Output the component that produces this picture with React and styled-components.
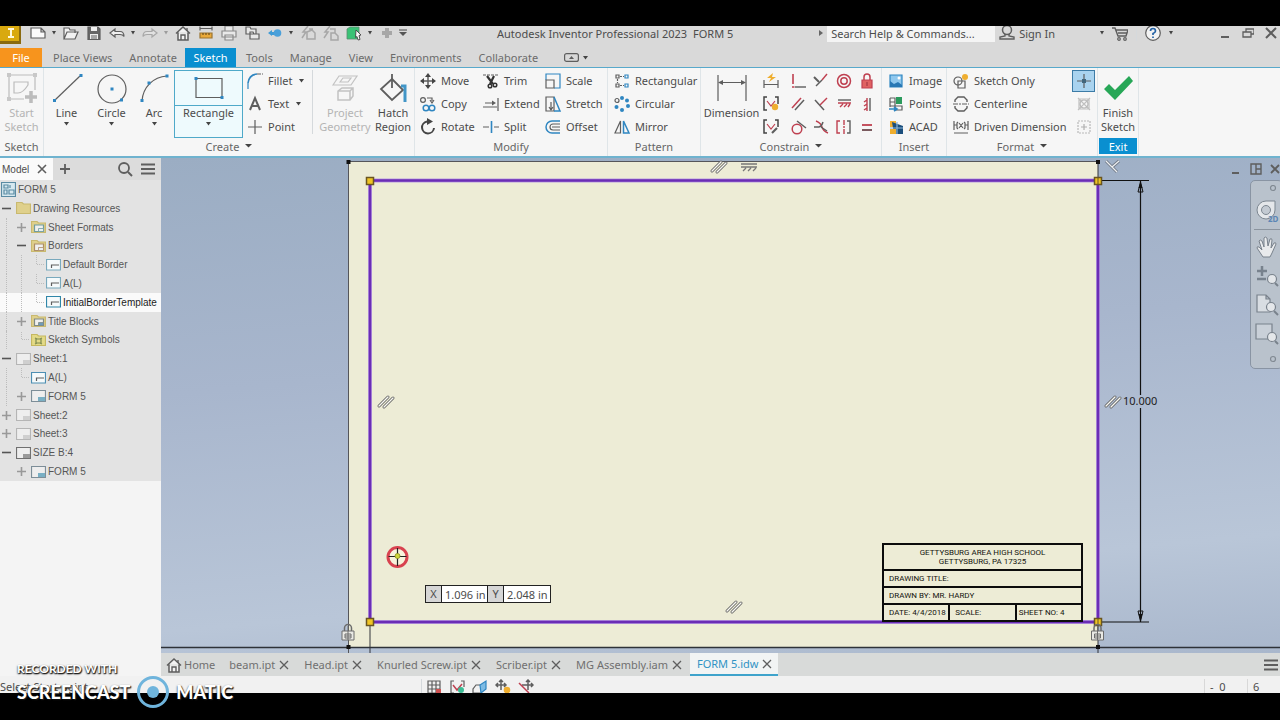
import React from 'react';
import styled, { createGlobalStyle, css } from 'styled-components';

const GlobalStyle = createGlobalStyle`
  * {
    box-sizing: border-box;
  }

  body {
    margin: 0;
    background: #000000;
    font-family: "Noto Sans", "Open Sans", sans-serif;
    font-size: 11px;
    color: #4c4c4c;
  }

  button, input {
    font-family: inherit;
    font-size: inherit;
    color: inherit;
  }

  svg {
    display: block;
    flex: none;
  }
`;

const Screen = styled.div`
  display: flex;
  flex-direction: column;
  height: 100vh;
  min-height: 600px;
  padding: 26px 0 27px;
  background: #000000;
  position: relative;
  overflow: hidden;
`;

const PlainButton = styled.button`
  display: flex;
  align-items: center;
  justify-content: center;
  padding: 0;
  border: none;
  background: transparent;
  cursor: pointer;
  white-space: nowrap;
`;

/* ---------- title bar ---------- */

const TitleBar = styled.header`
  display: flex;
  align-items: center;
  flex: none;
  height: 22px;
  padding-bottom: 8px;
  background: #d9d9d9;
  overflow: hidden;
`;

const QuickAccess = styled.div`
  display: flex;
  align-items: center;
  flex: none;
  width: 413px;
`;

const QuickButton = styled(PlainButton)`
  width: ${({ $caret }) => ($caret ? '10px' : '23px')};
  height: 18px;
  opacity: ${({ $dim }) => ($dim ? 0.4 : 1)};
`;

const Logo = styled.div`
  width: 21px;
  margin-right: 5px;
`;

const WindowTitle = styled.div`
  display: flex;
  gap: 6px;
  flex: 1;
  padding-left: 84px;
  white-space: nowrap;
`;

const SearchBox = styled.input`
  width: 168px;
  height: 18px;
  margin: 0 4px 0 3px;
  padding: 0 4px;
  border: none;
  background: #f4f4f4;

  &::placeholder {
    color: #4c4c4c;
    opacity: 1;
  }
`;

const SignIn = styled(PlainButton)`
  gap: 4px;
  margin-right: 45px;
`;

const TitleTools = styled.div`
  display: flex;
  align-items: center;
  gap: 8px;
  margin-right: 46px;
`;

const WindowButtons = styled.div`
  display: flex;
  gap: 11px;
  padding-right: 3px;
`;

/* ---------- ribbon ---------- */

const TabStrip = styled.nav`
  display: flex;
  flex: none;
  gap: 1px;
  height: 19px;
  background: #d9d9d9;
`;

const RibbonTab = styled(PlainButton)`
  height: 19px;
  padding: 0 7px 0 9px;
  color: #6b6b6b;

  ${({ $kind }) => $kind === 'file' && css`
    width: 42px;
    margin-right: 1px;
    padding: 0;
    background: #f7941d;
    color: #ffffff;
  `}

  ${({ $kind }) => $kind === 'active' && css`
    width: 51px;
    padding: 0;
    background: #0a8fd0;
    color: #ffffff;
  `}
`;

const RibbonToggle = styled(PlainButton)`
  gap: 4px;
  margin-left: 18px;
`;

const Ribbon = styled.div`
  display: flex;
  flex: none;
  height: 91px;
  border-top: 1px solid #58a9cb;
  border-bottom: 2px solid #6fb3cf;
  background: #f6f6f6;
`;

const Panel = styled.section`
  display: flex;
  flex-direction: column;
  flex: none;
  width: ${({ $width }) => $width}px;
  border-right: 1px solid #dfe5e8;
`;

const PanelTools = styled.div`
  display: flex;
  height: 70px;
  padding-top: 2px;
  padding-left: ${({ $left }) => $left || 0}px;
`;

const PanelLabel = styled.div`
  display: flex;
  align-items: center;
  justify-content: center;
  gap: 6px;
  height: 16px;
  color: #666666;

  ${({ $exit }) => $exit && css`
    margin: 0 1px;
    background: #0a8fd0;
    color: #ffffff;
  `}
`;

const BigButton = styled(PlainButton)`
  flex-direction: column;
  justify-content: flex-start;
  width: ${({ $width }) => $width}px;
  height: 68px;
  padding-top: 2px;
  line-height: 14px;
  white-space: pre-line;
  color: ${({ $dim }) => ($dim ? '#b4b4b4' : '#4c4c4c')};

  & > svg:first-child {
    margin-bottom: 2px;
  }

  & > svg:last-child:not(:first-child) {
    margin-top: 2px;
  }

  ${({ $selected }) => $selected && css`
    padding-top: 1px;
    border: 1px solid #4fa9c9;
    background: linear-gradient(#eefafd 34px, #4fa9c9 34px, #4fa9c9 35px, #eefafd 35px);
  `}
`;

const ToolGrid = styled.div`
  display: grid;
  grid-template-rows: repeat(3, 22px);
  grid-template-columns: ${({ $columns }) => $columns || 'auto'};
  grid-auto-flow: ${({ $flow }) => $flow || 'column'};
  row-gap: 1px;
  align-content: start;
  margin-left: ${({ $left }) => $left || 0}px;
`;

const SmallButton = styled(PlainButton)`
  justify-content: flex-start;
  gap: 4px;
  line-height: 14px;
  padding-bottom: 1px;

  & > svg:last-child:not(:first-child) {
    margin-left: 3px;
  }
`;

const ConstraintButton = styled(PlainButton)`
  justify-content: flex-start;
`;

const FormatToggle = styled(PlainButton)`
  width: 23px;
  height: 22px;
  border: 1px solid ${({ $on }) => ($on ? '#3c7ba6' : 'transparent')};
  background: ${({ $on }) => ($on ? '#a9d3ef' : 'transparent')};
`;

const Divider = styled.div`
  width: 1px;
  height: ${({ $height }) => $height || 64}px;
  background: #d5d9dc;
`;

/* ---------- browser panel ---------- */

const Workspace = styled.div`
  display: flex;
  flex: 1;
  min-height: 0;
`;

const Browser = styled.aside`
  display: flex;
  flex-direction: column;
  flex: none;
  width: 161px;
  background: #f4f4f4;
  font-family: "Liberation Sans", Arial, sans-serif;
`;

const BrowserHeader = styled.div`
  display: flex;
  align-items: center;
  flex: none;
  height: 22px;
  background: #dcdcdc;
`;

const BrowserTab = styled.div`
  display: flex;
  align-items: center;
  gap: 8px;
  width: 53px;
  height: 22px;
  padding-left: 2px;
  font-size: 10px;
  background: #fafafa;
`;

const BrowserTools = styled.div`
  display: flex;
  gap: 8px;
  margin-left: auto;
  padding-right: 6px;
`;

const Tree = styled.ul`
  display: grid;
  grid-template-rows: repeat(16, 1fr);
  height: 301px;
  margin: 0;
  padding: 0;
  list-style: none;
  font-size: 10px;
  background: #e3e3e3;
`;

const TreeRow = styled.li`
  display: flex;
  align-items: center;
  padding-left: ${({ $root }) => ($root ? 1 : 0)}px;
  white-space: nowrap;
  color: ${({ $selected }) => ($selected ? '#1c1c1c' : '#565656')};
  background: ${({ $selected }) => ($selected ? '#fafafa' : 'transparent')};
  overflow: hidden;

  & > svg:last-of-type {
    margin-right: 2px;
  }
`;

const Guide = styled.span`
  align-self: stretch;
  flex: none;
  width: 9px;
  margin-left: 6px;
  border-left: 1px dotted ${({ $blank }) => ($blank ? 'transparent' : '#bdbdbd')};
`;

const Expander = styled(PlainButton)`
  justify-content: flex-start;
  flex: none;
  width: 16px;
  height: 14px;
  padding-left: 2px;
`;

/* ---------- drawing area ---------- */

const DrawingColumn = styled.main`
  display: flex;
  flex-direction: column;
  flex: 1;
  min-width: 0;
`;

const Canvas = styled.div`
  position: relative;
  flex: 1;
  overflow: hidden;
  background: linear-gradient(175deg, #9badc3 0%, #a8b6cd 40%, #b9c6d8 80%, #a9b7cc 100%);
`;

const SheetDrawing = styled.svg`
  position: absolute;
  top: 0;
  left: 0;
  overflow: visible;
`;

const DimensionValue = styled.div`
  position: absolute;
  left: 962px;
  top: 235px;
  line-height: 16px;
  color: #222222;
`;

const CoordinateEntry = styled.div`
  position: absolute;
  left: 264px;
  top: 427px;
  display: flex;
  height: 18px;
  border: 1px solid #222222;
`;

const CoordinateLabel = styled.label`
  width: 15px;
  text-align: center;
  line-height: 16px;
  background: #d6d6d6;
`;

const CoordinateInput = styled.input`
  width: 47px;
  padding: 0 0 0 3px;
  border: none;
  border-left: 1px solid #222222;
  border-right: ${({ $last }) => ($last ? 'none' : '1px solid #222222')};
  background: #ffffff;
`;

const TitleBlock = styled.table`
  position: absolute;
  left: 721px;
  top: 385px;
  width: 201px;
  table-layout: fixed;
  border-collapse: collapse;
  font-family: Roboto, "Noto Sans", sans-serif;
  font-size: 8px;
  line-height: 9px;
  color: #14140e;

  td {
    height: 17px;
    padding: 0 0 0 5px;
    border: 2px solid #0c0c0c;
    white-space: nowrap;
  }

  tr:first-child td {
    height: 26px;
    padding: 0;
    text-align: center;
  }

  tr:last-child td:last-child {
    padding-left: 2px;
  }
`;

const DocumentButtons = styled.div`
  position: absolute;
  top: 5px;
  right: 0;
  display: flex;
  gap: 8px;
`;

const NavigationBar = styled.div`
  position: absolute;
  top: 22px;
  right: -3px;
  display: flex;
  flex-direction: column;
  align-items: center;
  gap: 5px;
  width: 33px;
  height: 189px;
  padding-top: 4px;
  border: 1px solid #8994a3;
  border-radius: 5px;
  background: #b9c2cc;
`;

const DocumentTabs = styled.div`
  display: flex;
  align-items: center;
  flex: none;
  height: 23px;
  padding-left: 5px;
  background: #d8dad9;
`;

const DocumentTab = styled.div`
  display: flex;
  align-items: center;
  gap: ${({ $home }) => ($home ? 2 : 4)}px;
  height: 23px;
  padding: 0 ${({ $home }) => ($home ? 5 : 6)}px 0 ${({ $home }) => ($home ? 0 : 9)}px;
  white-space: nowrap;
  color: #707070;

  ${({ $active }) => $active && css`
    padding: 0 6px 0 7px;
    margin-left: 2px;
    border-bottom: 2px solid #3fa3cb;
    background: #f2f4f4;
    color: #2f93c4;
  `}
`;

const TabMenu = styled(PlainButton)`
  margin-left: auto;
  padding-right: 2px;
`;

const StatusBar = styled.footer`
  display: flex;
  align-items: center;
  flex: none;
  height: 17px;
  padding-top: 4px;
  background: #f1f1f1;
  overflow: hidden;
`;

const StatusText = styled.div`
  width: 421px;
  white-space: nowrap;
`;

const StatusTools = styled.div`
  display: flex;
  flex: 1;
  gap: 7px;
  padding-left: 4px;
`;

const StatusCount = styled.div`
  width: ${({ $width }) => $width}px;
  border-left: 1px solid #d8d8d8;
  padding-left: 5px;
  white-space: pre;
`;

const Watermark = styled.div`
  position: absolute;
  left: 17px;
  bottom: 11px;
  font-family: Lato, sans-serif;
  font-weight: 700;
  color: #ffffff;
  text-shadow: 0 1px 2px #000000, 1px 1px 1px #333333;
`;

const WatermarkTop = styled.div`
  font-size: 12px;
  line-height: 12px;
`;

const WatermarkBrand = styled.div`
  display: flex;
  align-items: center;
  gap: 6px;
  font-size: 18px;
  font-weight: 900;
  line-height: 18px;
`;

/* ---------- icons ---------- */

const GREY = '#5e5e5e';
const BLUE = '#2f86c1';
const RED = '#bf4050';

const Icon = ({ size = 18, w, h, box, children }) => (
  <svg
    width={w || size}
    height={h || size}
    viewBox={box || `0 0 ${w || size} ${h || size}`}
    fill="none"
    stroke={GREY}
    strokeWidth="1.2"
    aria-hidden="true"
  >
    {children}
  </svg>
);

const Caret = ({ size = 5 }) => (
  <Icon w={size} h={4}>
    <path d={`M0 0h${size}l-${size / 2} 3.5z`} fill="#444" stroke="none" />
  </Icon>
);

const Close = ({ size = 10, width = 1.6 }) => (
  <Icon size={size}>
    <path d={`M1 1l${size - 2} ${size - 2}M${size - 1} 1L1 ${size - 1}`} strokeWidth={width} />
  </Icon>
);

const Bars = () => (
  <Icon w={14} h={12}>
    <path d="M0 1.5h14M0 6h14M0 10.5h14" strokeWidth="1.8" />
  </Icon>
);

const HomeIcon = () => (
  <Icon size={16}>
    <path d="M1 8.5L8 2l7 6.500M3 7.500V15h10V7.500" strokeWidth="1.5" fill="#f3f3f3" />
    <path d="M6 15v-5h4v5M12 3v3" strokeWidth="1.4" />
  </Icon>
);

const Handle = ({ x, y }) => <rect x={x - 1.5} y={y - 1.5} width="3" height="3" fill={BLUE} stroke="none" />;

const quickItems = [
  { name: 'New', icon: <Icon size={16}><path d="M1 3h10l4 4v6H1zM11 3v4h4" fill="#fafafa" /></Icon> },
  { caret: true, name: 'New options' },
  { name: 'Open', icon: <Icon size={16}><path d="M1 14V3h5l1 2h5v3M1 14l3-7h11l-3 7z" fill="#f2f2f2" /></Icon> },
  {
    name: 'Save',
    icon: (
      <Icon size={16}>
        <path d="M2 2h10l2 2v10.500H2z" fill="#666" />
        <path d="M5 2h6v4H5zM4 9h8v5H4z" fill="#eee" stroke="none" />
        <path d="M5 11h6M5 13h6" strokeWidth="1" />
      </Icon>
    ),
  },
  { name: 'Undo', icon: <Icon size={16}><path d="M1 8l5-4v2.500h5q4 0 4 5-1-2-4-2H6V12z" fill="#eee" /></Icon> },
  { caret: true, name: 'Undo options' },
  { name: 'Redo', dim: true, icon: <Icon size={16}><path d="M15 8l-5-4v2.500H5q-4 0-4 5 1-2 4-2h5V12z" fill="#eee" /></Icon> },
  { caret: true, dim: true, name: 'Redo options' },
  { name: 'Home', icon: <HomeIcon /> },
  {
    name: 'Measure',
    icon: (
      <Icon size={16}>
        <path d="M2 3.500h12M2 1.500v4M14 1.500v4" />
        <path d="M2 8h12v5H2z" fill="#e9a93a" stroke="#9b7430" />
        <path d="M5 8v2M8 8v2M11 8v2" stroke="#6d4f1c" />
      </Icon>
    ),
  },
  { name: 'Print', icon: <Icon size={16}><path d="M4 6V1h8v5M1 6h14v6H1zM4 10h8v5H4z" fill="#e9e9e9" stroke="#8a8a8a" /></Icon> },
  { name: 'Sheets', icon: <Icon size={16}><path d="M2 9V2h4l1 2h5v5zM6 14V7h3l1 2h5v5z" fill="#e8e8e8" /></Icon> },
  {
    name: 'Return',
    icon: (
      <Icon size={16}>
        <path d="M1 8l4-3v2h2v3H5v1z" fill="#3f9bd6" stroke="none" />
        <circle cx="10.5" cy="8" r="3.8" fill="#4aa0da" stroke="none" />
      </Icon>
    ),
  },
  { caret: true, name: 'Return options' },
  { name: 'Update', dim: true, icon: <Icon size={16}><path d="M8 1L3 7h3l-4 6M7 7l5-2 3 3v6H7zM9 4h4" strokeWidth="1.5" /></Icon> },
  { name: 'Rebuild', dim: true, icon: <Icon size={16}><path d="M7 1L2 7h3l-4 6M8 8h4l3 3v4H8zM12 8V4H7" strokeWidth="1.5" /></Icon> },
  {
    name: 'Select',
    icon: (
      <Icon size={16}>
        <path d="M1 4l3-2h9v10l-2 2H1z" fill="#39c275" stroke="#5c8c70" strokeWidth=".8" />
        <path d="M10 5l5 5-2 .5 1 4-2 .5-1-3.500-1.500 1z" fill="#fafafa" stroke="#444" strokeWidth=".9" />
      </Icon>
    ),
  },
  { caret: true, name: 'Select options' },
  { name: 'Add', dim: true, icon: <Icon size={16}><path d="M8 3v10M3 8h10" strokeWidth="4" /></Icon> },
];

const bigIcons = {
  line: <Icon size={32}><path d="M4 28L29 4" /><Handle x={3.5} y={28.5} /><Handle x={30} y={3.5} /></Icon>,
  circle: <Icon size={32}><circle cx="16" cy="17" r="14" /><Handle x={16} y={17} /><Handle x={25.5} y={28} /></Icon>,
  arc: <Icon size={32}><path d="M4 29C5 15 15 5 29 4" /><Handle x={4} y={28.5} /><Handle x={11} y={11} /><Handle x={29} y={4} /></Icon>,
  rect: <Icon size={32}><path d="M3 6.500h26v19H3z" /><Handle x={3} y={6.5} /><Handle x={29} y={25.5} /></Icon>,
  sketch: (
    <Icon size={32}>
      <g stroke="#bcbcbc">
        <path d="M3 3h26v15M3 3v24h15" />
        <path d="M8 10h14v3Q17 21 12 21H8z" />
        <path d="M25 19v12M19 25h12" strokeWidth="3.5" />
      </g>
      <path d="M1 1h4v4H1zM27 1h4v4h-4zM1 25h4v4H1z" fill="#c8c8c8" stroke="none" />
    </Icon>
  ),
  project: (
    <Icon size={32}>
      <g stroke="#c2c2c2">
        <path d="M4 13L10 4h18l-6 9zM11 10l3-4h8l-3 4z" />
        <path d="M9 19l4-3h11v8l-3 4H9zM9 19h12v9M21 19l3-3" strokeWidth="1.5" />
      </g>
    </Icon>
  ),
  hatch: (
    <Icon size={32}>
      <path d="M15 7L26 18 15 28 4 17z" strokeWidth="1.8" />
      <path d="M15 2v14" strokeWidth="1.8" />
      <path d="M24 14h4v16" stroke="#4296c7" strokeWidth="3" />
    </Icon>
  ),
  dimension: <Icon size={32}><path d="M2 3v26M30 3v26M3 10.500h26" /><path d="M2 10.500l5-2.500v5zM30 10.500l-5-2.500v5z" fill={GREY} stroke="none" /></Icon>,
  check: <Icon size={32}><path d="M2 17l5-5 6 6L27 4l4 5-18 19z" fill="#27a757" stroke="none" /></Icon>,
};

const createTools = [
  ['Fillet', <Icon><path d="M2 17V11" stroke={BLUE} /><path d="M2 11Q3 3 11 2" stroke={BLUE} strokeWidth="1.6" /><path d="M11 2h6" strokeDasharray="4 1" /></Icon>, true],
  ['Text', <Icon><path d="M4 15L9 3l5 12M6 11h6" strokeWidth="2" /></Icon>, true],
  ['Point', <Icon><path d="M9 2v5M9 11v5M2 9h5M11 9h5" /><path d="M9 7v4M7 9h4" /></Icon>],
];

const modifyTools = [
  ['Move', <Icon><path d="M9 3v12M3 9h12" strokeWidth="1.5" /><path d="M9 1l3 4H6zM9 17l3-4H6zM1 9l4-3v6zM17 9l-4-3v6z" fill="#444" stroke="none" /></Icon>],
  ['Copy', <Icon><circle cx="4" cy="5" r="2.4" /><path d="M8 3h5v3m-2-1l2 3 2-3" /><g stroke={BLUE} strokeWidth="1.5"><circle cx="7" cy="13" r="2.8" /><circle cx="13" cy="13" r="2.8" /></g></Icon>],
  ['Rotate', <Icon><path d="M8 3.500A6 6 0 1 0 15 10" strokeWidth="2" stroke="#444" /><path d="M8 0l6 3.500-6 3.500z" fill="#444" stroke="none" /></Icon>],
  ['Trim', <Icon><path d="M1 3h16" strokeDasharray="3 1" /><path d="M5 4l6 8M12 4l-4 8" strokeWidth="2.2" stroke="#333" /><circle cx="8" cy="14" r="1.8" strokeWidth="1.5" stroke="#333" /><circle cx="13" cy="13" r="1.8" strokeWidth="1.5" stroke="#333" /></Icon>],
  ['Extend', <Icon><path d="M1 12h14M3 8h8M16 3v13" /><path d="M10 5.500l4 2.500-4 2.500z" fill={GREY} stroke="none" /></Icon>],
  ['Split', <Icon><path d="M1 9h6M12 9h5" /><path d="M9.500 3v12" stroke={BLUE} strokeWidth="1.6" /></Icon>],
  ['Scale', <Icon><path d="M2 8V2h14v14h-6" stroke={BLUE} /><path d="M2 8h8v8H2z" /></Icon>],
  ['Stretch', <Icon><path d="M2 2h8v14H2z" /><path d="M10 2l6 14h-6" stroke={BLUE} strokeWidth="1.5" /><path d="M7 7v7m-2-2l2 3 2-3" /></Icon>],
  ['Offset', <Icon><path d="M16 3H8a6 6 0 0 0 0 12h8" stroke={BLUE} strokeWidth="1.5" /><path d="M16 6H9a3 3 0 0 0 0 6h7M8 9h8" /></Icon>],
];

const patternTools = [
  ['Rectangular', <Icon><path d="M3 3h3v3H3zM3 12h3v3H3z" /><path d="M12 3h3v3h-3zM12 12h3v3h-3z" stroke={BLUE} /><path d="M7 4.500h4M7 13.500h4M4.500 7v4" strokeDasharray="2 1" /></Icon>],
  ['Circular', (
    <Icon>
      <g fill={BLUE} stroke="none">
        <circle cx="9" cy="3" r="2" /><circle cx="14" cy="5.5" r="2" /><circle cx="15" cy="11" r="2" />
        <circle cx="9" cy="15" r="2" /><circle cx="3.5" cy="12" r="2" />
      </g>
      <circle cx="4" cy="5.5" r="2" />
    </Icon>
  )],
  ['Mirror', <Icon><path d="M7.500 3v12H2z" /><path d="M10.500 3v12H16z" stroke={BLUE} strokeWidth="1.5" /></Icon>],
];

const constrainTools = [
  ['Automatic Dimension', <Icon><path d="M2 8v8M16 8v8M2 12.500h14" /><path d="M11 1L5 6h4L7 10l7-5h-4z" fill="#efae2f" stroke="none" /></Icon>],
  ['Coincident', <Icon><path d="M6 15h11" strokeWidth="1.4" /><path d="M4 2v10M3 15h2.500" stroke={RED} strokeWidth="1.6" /></Icon>],
  ['Collinear', <Icon><path d="M2 5l5 5" strokeWidth="2" /><path d="M4 14l6-6" strokeWidth="1.4" /><path d="M10 8l5-6" stroke={RED} strokeWidth="1.4" /></Icon>],
  ['Concentric', <Icon><circle cx="9" cy="9" r="6.5" stroke={RED} strokeWidth="1.5" /><circle cx="9" cy="9" r="3.2" stroke={RED} strokeWidth="1.5" /></Icon>],
  ['Fix', <Icon><path d="M6 8V5a3 3 0 0 1 6 0v3" stroke={RED} strokeWidth="1.5" /><path d="M4 8h10v8H4z" fill="#e06262" stroke={RED} /><path d="M9 10v4" stroke="#a53a45" /></Icon>],
  ['Show Constraints', <Icon><path d="M5 2H2v13h3M13 2h3v7" stroke="#444" strokeWidth="1.5" /><path d="M5 6l4 5 4-5" stroke={RED} /><circle cx="13" cy="12" r="3.2" fill="#efae2f" stroke="none" /></Icon>],
  ['Parallel', <Icon><path d="M3 13L12 3" stroke={RED} strokeWidth="1.5" /><path d="M6 15l9-10" strokeWidth="1.5" /></Icon>],
  ['Perpendicular', <Icon><path d="M3 5l9 10" strokeWidth="1.5" /><path d="M8 10l7-7" stroke={RED} strokeWidth="1.5" /></Icon>],
  ['Horizontal', <Icon><path d="M3 5h13" strokeWidth="1.4" /><path d="M3 8h13M5 12l3-3M9 12l3-3M13 12l2-3" stroke={RED} strokeWidth="1.4" /></Icon>],
  ['Vertical', <Icon><path d="M12 3v13" strokeWidth="1.4" /><path d="M9 3v13M9 5L6 7M9 9l-3 2M9 13l-3 2" stroke={RED} strokeWidth="1.4" /></Icon>],
  ['Constraint Settings', <Icon><path d="M5 2H2v13h3M13 2h3v7" stroke="#444" strokeWidth="1.5" /><path d="M5 6l4 5 4-5" stroke={RED} /><path d="M10 15l5-5" strokeWidth="2.2" /></Icon>],
  ['Tangent', <Icon><circle cx="8" cy="11" r="4.8" stroke={RED} strokeWidth="1.5" /><path d="M8 3l9 7" strokeWidth="1.5" /></Icon>],
  ['Smooth', <Icon><path d="M4 3q5 2 6 6t6 6" stroke={RED} strokeWidth="1.4" /><path d="M2 9h5q3-1 4-5M9 9l6 4" strokeWidth="1.4" /></Icon>],
  ['Symmetric', <Icon><path d="M5 3H2v12h3M9 2v5M9 8v2M9 11v5" stroke={RED} strokeWidth="1.4" /><path d="M12 3h3v12h-3" strokeWidth="1.4" /></Icon>],
  ['Equal', <Icon><path d="M4 7h10" stroke={RED} strokeWidth="1.8" /><path d="M4 12h10" stroke="#6e4a4e" strokeWidth="1.8" /></Icon>],
];

const insertTools = [
  ['Image', <Icon><path d="M3 3h12v12H3z" fill="#8fc8ee" stroke={BLUE} /><path d="M3 15V9l4 3 4-2 4 3v2z" fill="#2878b5" stroke="none" /><circle cx="12" cy="6" r="1.5" fill="#fff" stroke="none" /></Icon>],
  ['Points', <Icon><path d="M3 3h5v12M3 3v9M3 7h5M3 11h5M8 11h7v4H8" /><path d="M9 2h6v7H9z" fill="#2b9a5c" stroke="none" /><path d="M2 14h7m-2-2l3 2-3 2" stroke={BLUE} strokeWidth="1.6" /></Icon>],
  ['ACAD', <Icon><path d="M3 3h6v6H3z" fill="#efae2f" stroke="none" /><path d="M5 4l11 4v8H7z" fill="#1b4e7c" stroke="none" /><path d="M3 10h13M10 4v12" stroke="#8bb5d8" /><path d="M3 11h6v5H3z" fill="#efae2f" stroke="none" /></Icon>],
];

const formatTools = [
  ['Sketch Only', <Icon><circle cx="6" cy="9" r="4" /><path d="M6 9h7v7H6z" /><circle cx="13" cy="5" r="3" fill="#efae2f" stroke="none" /></Icon>],
  ['Centerline', <Icon><path d="M3 7V5l3-3h6l3 3v2M3 11v2l3 3h6l3-3v-2" strokeWidth="1.4" /><path d="M1 9h16" strokeDasharray="5 1 2 1" /></Icon>],
  ['Driven Dimension', <Icon><path d="M2 3v9M16 3v9M2 7h3M13 7h3M6 4l-1 1v5l1 1M12 4l1 1v5l-1 1M7 5l4 5M11 5l-4 5M2 15h14" /></Icon>],
];

const sheetIcon = (color, fill) => (
  <Icon w={15} h={14}>
    <path d="M.5 1.500h14v11H.5z" fill="#eeeeee" stroke={color} />
    <path d="M7 8h7v4H7z" fill={fill} stroke="none" />
  </Icon>
);

const folderIcon = (color, fill = '#e8edef') => (
  <Icon w={15} h={14}>
    <path d="M.5 12.500v-11H6l1.500 1.500h7v9.500z" fill="#dfd08c" stroke="#c9b96f" />
    {color && <path d="M3.500 5h9v6.500h-9z" fill="#f0f0ee" stroke={color} />}
    {color && <path d="M7.500 8.500h5v3h-5z" fill={fill} stroke={color} strokeWidth=".8" />}
  </Icon>
);

const borderIcon = (color) => (
  <Icon w={15} h={14}>
    <path d="M.5 1.500h14v10.500H.5z" fill="#f6fafb" stroke={color} />
    <path d="M5.500 10V7H13" />
  </Icon>
);

const treeItems = [
  {
    level: 0, label: 'FORM 5',
    icon: <Icon w={15} h={15}><path d="M.5.5h14v14H.5z" fill="#d6e8ef" stroke="#5a8ba3" /><path d="M3 3h4v3H3zM3 8h3v4H3zM8 8h5v4H8zM9 3v3" stroke="#5a8ba3" /></Icon>,
  },
  { level: 1, label: 'Drawing Resources', state: 'open', icon: folderIcon() },
  { level: 2, label: 'Sheet Formats', state: 'closed', icon: folderIcon('#6f9c9f') },
  { level: 2, label: 'Borders', state: 'open', icon: folderIcon('#ad8d68') },
  { level: 3, label: 'Default Border', icon: borderIcon('#79a9bd') },
  { level: 3, label: 'A(L)', icon: borderIcon('#79a9bd') },
  { level: 3, label: 'InitialBorderTemplate', selected: true, icon: borderIcon('#2f86a8') },
  { level: 2, label: 'Title Blocks', state: 'closed', icon: folderIcon('#808a86', '#6f9cba') },
  {
    level: 2, label: 'Sketch Symbols',
    icon: <Icon w={15} h={14}><path d="M.5 12.500v-11H6l1.500 1.500h7v9.500z" fill="#e3da86" stroke="#c5b860" /><path d="M4 5l2 1h3l2-1M4 11l2-1h3l2 1M5 6v4M10 6v4" stroke="#7c8a50" /></Icon>,
  },
  { level: 1, label: 'Sheet:1', state: 'open', icon: sheetIcon('#b5b5b5', '#cfcfcf') },
  { level: 2, label: 'A(L)', icon: borderIcon('#4d8fb3') },
  { level: 2, label: 'FORM 5', state: 'closed', icon: sheetIcon('#7d8e98', '#79afc4') },
  { level: 1, label: 'Sheet:2', state: 'closed', icon: sheetIcon('#b5b5b5', '#cfcfcf') },
  { level: 1, label: 'Sheet:3', state: 'closed', icon: sheetIcon('#b5b5b5', '#cfcfcf') },
  { level: 1, label: 'SIZE B:4', state: 'open', icon: sheetIcon('#707070', '#9a9a9a') },
  { level: 2, label: 'FORM 5', state: 'closed', icon: sheetIcon('#7d8e98', '#79afc4') },
];

const documents = ['beam.ipt', 'Head.ipt', 'Knurled Screw.ipt', 'Scriber.ipt', 'MG Assembly.iam', 'FORM 5.idw'];

/* ---------- parts ---------- */

const Tools = ({ items, ...grid }) => (
  <ToolGrid {...grid}>
    {items.map(([label, icon, menu]) => (
      <SmallButton key={label}>
        {icon}
        <span>{label}</span>
        {menu && <Caret />}
      </SmallButton>
    ))}
  </ToolGrid>
);

const TopBar = () => (
  <TitleBar>
    <QuickAccess>
      <Logo>
        <Icon w={21} h={22}>
          <path d="M0 0h21v22H0z" fill="#8a6a10" stroke="none" />
          <path d="M0 0h19v19H0z" fill="#d9a90f" stroke="none" />
          <path d="M8 7h6M8 15h6M11 7v8" stroke="#fff8dc" strokeWidth="2" />
        </Icon>
      </Logo>
      {quickItems.map((item) => (
        <QuickButton key={item.name} aria-label={item.name} $caret={item.caret} $dim={item.dim}>
          {item.caret ? <Caret size={4} /> : item.icon}
        </QuickButton>
      ))}
      <QuickButton aria-label="Customize" $caret>
        <Icon w={8} h={8}><path d="M0 1h8" /><path d="M0 3h8L4 7z" fill="#555" stroke="none" /></Icon>
      </QuickButton>
    </QuickAccess>
    <WindowTitle>
      <span>Autodesk Inventor Professional 2023</span>
      <span>FORM 5</span>
    </WindowTitle>
    <Icon w={5} h={8}><path d="M0 1l4 3-4 3z" fill="#666" stroke="none" /></Icon>
    <SearchBox aria-label="Search help" placeholder="Search Help &amp; Commands..." />
    <SignIn>
      <Icon size={16}><circle cx="8" cy="5" r="4.5" strokeWidth="1.5" /><path d="M6 9v2l-5 1v2h14v-2l-5-1V9" strokeWidth="1.4" /></Icon>
      <span>Sign In</span>
    </SignIn>
    <TitleTools>
      <Caret size={4} />
      <Icon size={16}><path d="M0 3h3l3 8h8l2-6H4M6 8h9" strokeWidth="1.4" /><circle cx="7" cy="14" r="1.3" /><circle cx="13" cy="14" r="1.3" /></Icon>
      <Divider $height={16} />
      <PlainButton aria-label="Help">
        <Icon size={16}>
          <circle cx="8" cy="8" r="7.3" fill="#f3f3f3" />
          <path d="M5.500 6q0-2.500 2.500-2.500T10.500 6Q10.500 7.500 8 8.500V10M8 11.500v1.500" stroke="#2462a5" strokeWidth="1.7" />
        </Icon>
      </PlainButton>
      <Caret size={4} />
    </TitleTools>
    <WindowButtons>
      <PlainButton aria-label="Minimize"><Icon size={12}><path d="M2 10h8" strokeWidth="2" /></Icon></PlainButton>
      <PlainButton aria-label="Restore"><Icon size={12}><path d="M1 5h8v5H1zM4 5V2h8v5H9" strokeWidth="1.3" /></Icon></PlainButton>
      <PlainButton aria-label="Close"><Close size={12} width={2} /></PlainButton>
    </WindowButtons>
  </TitleBar>
);

const RibbonBar = () => (
  <Ribbon>
    <Panel $width={44}>
      <PanelTools>
        <BigButton $width={43} $dim>{bigIcons.sketch}{'Start\nSketch'}</BigButton>
      </PanelTools>
      <PanelLabel>Sketch</PanelLabel>
    </Panel>
    <Panel $width={371}>
      <PanelTools>
        <BigButton $width={45}>{bigIcons.line}Line<Caret /></BigButton>
        <BigButton $width={45}>{bigIcons.circle}Circle<Caret /></BigButton>
        <BigButton $width={40}>{bigIcons.arc}Arc<Caret /></BigButton>
        <BigButton $width={69} $selected>{bigIcons.rect}Rectangle<Caret /></BigButton>
        <Tools items={createTools} $columns="66px" $left={3} />
        <Divider />
        <BigButton $width={64} $dim>{bigIcons.project}{'Project\nGeometry'}</BigButton>
        <BigButton $width={32}>{bigIcons.hatch}{'Hatch\nRegion'}</BigButton>
      </PanelTools>
      <PanelLabel>Create <Caret size={7} /></PanelLabel>
    </Panel>
    <Panel $width={193}>
      <PanelTools $left={4}>
        <Tools items={modifyTools} $columns="63px 62px 60px" />
      </PanelTools>
      <PanelLabel>Modify</PanelLabel>
    </Panel>
    <Panel $width={93}>
      <PanelTools $left={5}>
        <Tools items={patternTools} />
      </PanelTools>
      <PanelLabel>Pattern</PanelLabel>
    </Panel>
    <Panel $width={181}>
      <PanelTools>
        <BigButton $width={64}>{bigIcons.dimension}Dimension</BigButton>
        <ToolGrid $columns="27px repeat(4, 23px)" $flow="row">
          {constrainTools.map(([label, icon]) => (
            <ConstraintButton key={label} aria-label={label}>{icon}</ConstraintButton>
          ))}
        </ToolGrid>
      </PanelTools>
      <PanelLabel>Constrain <Caret size={7} /></PanelLabel>
    </Panel>
    <Panel $width={65}>
      <PanelTools $left={5}>
        <Tools items={insertTools} />
      </PanelTools>
      <PanelLabel>Insert</PanelLabel>
    </Panel>
    <Panel $width={151}>
      <PanelTools $left={5}>
        <Tools items={formatTools} $columns="120px" />
        <ToolGrid>
          <FormatToggle $on aria-label="Center Point"><Icon><path d="M9 2v14M2 9h14" /><path d="M7 7h4v4H7z" fill="#42667c" stroke="none" /></Icon></FormatToggle>
          <FormatToggle aria-label="Construction"><Icon><path d="M3 3l12 12M15 3L3 15M4 4h10v10H4z" stroke="#c0c0c0" /><circle cx="9" cy="9" r="4" stroke="#b5b5b5" /></Icon></FormatToggle>
          <FormatToggle aria-label="Show Format"><Icon><path d="M3 3h12v12H3z" stroke="#b8b8b8" strokeDasharray="2 1" /><path d="M9 6v6M6 9h6" stroke="#b0b0b0" /></Icon></FormatToggle>
        </ToolGrid>
      </PanelTools>
      <PanelLabel>Format <Caret size={7} /></PanelLabel>
    </Panel>
    <Panel $width={41}>
      <PanelTools>
        <BigButton $width={41}>{bigIcons.check}{'Finish\nSketch'}</BigButton>
      </PanelTools>
      <PanelLabel $exit>Exit</PanelLabel>
    </Panel>
  </Ribbon>
);

const BrowserPanel = () => (
  <Browser>
    <BrowserHeader>
      <BrowserTab>
        Model
        <PlainButton aria-label="Close panel"><Close /></PlainButton>
      </BrowserTab>
      <PlainButton aria-label="Add panel">
        <Icon w={24} h={12}><path d="M12 1v10M7 6h10" strokeWidth="1.8" /></Icon>
      </PlainButton>
      <BrowserTools>
        <PlainButton aria-label="Search"><Icon size={16}><circle cx="7" cy="7" r="5" strokeWidth="1.8" /><path d="M11 11l4 4" strokeWidth="2" /></Icon></PlainButton>
        <PlainButton aria-label="Menu"><Bars /></PlainButton>
      </BrowserTools>
    </BrowserHeader>
    <Tree>
      {treeItems.map((item, i) => (
        <TreeRow key={i} $root={item.level === 0} $selected={item.selected}>
          {item.level > 1 && <Guide $blank={i > 14} />}
          {item.level > 2 && <Guide />}
          {item.state && (
            <Expander aria-label={item.state === 'open' ? 'Collapse' : 'Expand'}>
              <Icon size={9}><path d={item.state === 'open' ? 'M0 4.500h9' : 'M0 4.500h9M4.500 0v9'} strokeWidth="1.6" stroke={item.state === 'open' ? '#555' : '#999'} /></Icon>
            </Expander>
          )}
          {item.level > 0 && !item.state && <Icon w={16} h={19}><path d="M6.500 0v9.500H14" stroke="#bdbdbd" strokeWidth="1" strokeDasharray="1 1" /></Icon>}
          {item.icon}
          {item.label}
        </TreeRow>
      ))}
    </Tree>
  </Browser>
);

const Parallel = ({ x, y }) => (
  <g transform={`translate(${x} ${y})`} strokeLinecap="round">
    <path d="M-6 4L3-5M-1 5L8-4" stroke="#5f5f5f" strokeWidth="3" />
    <path d="M-6 4L3-5M-1 5L8-4" stroke="#fafaf4" strokeWidth="1.4" />
  </g>
);

const Padlock = ({ x, y }) => (
  <g transform={`translate(${x} ${y})`} stroke="#6c6c6c">
    <path d="M-3.500-1v-3a3.500 3.500 0 0 1 7 0v3" strokeWidth="1.5" />
    <path d="M-6-1H6V8H-6z" fill="#e9e9e4" />
    <path d="M-3 2h6v4h-6zM0-6V8M-3 4h6" strokeWidth="1" />
  </g>
);

const Corner = ({ x, y }) => (
  <rect x={x - 3.5} y={y - 3.5} width="7" height="7" fill="#f0c425" stroke="#6a5520" strokeWidth="1.5" />
);

/* Drawn in window coordinates, the canvas starting at 161,158 */
const Sheet = () => (
  <SheetDrawing width="1119" height="495" viewBox="161 158 1119 495" fill="none">
    <rect x="348" y="162" width="750" height="485" fill="#edecd6" />
    <path d="M348.500 653V161.500H1098" stroke="#55565a" />
    <path d="M1098 161.500V653M370 622v31" stroke="#33343a" />
    <path d="M161 647.500H3000" stroke="#2e3238" strokeWidth="1.6" />
    <path d="M346.500 160h4v4h-4zM346.500 645h4v4h-4zM1096 160h4v4h-4zM1096 645h4v4h-4z" fill="#111" />
    <path d="M370 180.500H1098V622H370z" stroke="#b99be0" strokeWidth="4" />
    <path d="M370 180.500H1098V622H370z" stroke="#6a2db5" strokeWidth="2.5" />
    <path d="M1101 180.500h48M1101 622h48M1140.500 181v214M1140.500 408v214" stroke="#111" strokeWidth="1.2" />
    <path d="M1140.500 182l-2.500 10h5zM1140.500 621l-2.500-10h5z" stroke="#111" />
    <path d="M1140.500 182l-2 6h4zM1140.500 621l-2-7h4z" fill="#111" />
    <Corner x={370} y={181} />
    <Corner x={1098} y={181} />
    <Corner x={370} y={622} />
    <Corner x={1098} y={622} />
    <path d="M1098 177v8M1098 618v8" stroke="#6a5520" />
    <Parallel x={718} y={167} />
    <Parallel x={385} y={402} />
    <Parallel x={733} y={607} />
    <Parallel x={1112} y={402} />
    <path d="M741 164h16M741 167h16M743 171l3-3M748 171l3-3M753 171l3-3" stroke="#777" strokeWidth="1.3" />
    <path d="M1106 161l11 11M1112 167l7-6" stroke="#737b88" strokeWidth="3" />
    <path d="M1106 161l11 11M1112 167l7-6" stroke="#eef0f2" strokeWidth="1.2" />
    <Padlock x={348} y={632} />
    <Padlock x={1097.5} y={632} />
    <circle cx="397.5" cy="557" r="9.5" fill="#f7f3dc" stroke="#d8424f" strokeWidth="3" />
    <path d="M397.500 548v18M388.500 556.500h18" stroke="#222" strokeWidth="1.2" />
    <circle cx="397.5" cy="556" r="2.5" fill="#cfd63a" stroke="#8b9120" strokeWidth=".8" />
  </SheetDrawing>
);

const NavigationTools = () => (
  <NavigationBar>
    <Icon w={22} h={8}><circle cx="17" cy="3" r="2.5" stroke="#808992" /></Icon>
    <PlainButton aria-label="Steering wheel">
      <svg width="24" height="26" viewBox="0 0 24 26" fill="none">
        <path d="M11 3h9v9a9 9 0 1 1-9-9z" fill="#e4e7ea" stroke="#7d8791" />
        <circle cx="11" cy="12" r="4.5" fill="#c3cad2" stroke="#7d8791" />
        <text x="13" y="24" fontSize="8" fontWeight="700" fill="#5c86b5">2D</text>
      </svg>
    </PlainButton>
    <Icon w={26} h={1}><path d="M0 .5h26" stroke="#8b949e" /></Icon>
    <PlainButton aria-label="Pan">
      <Icon size={24}><path d="M8 22L2 13q0-2 2-1l3 3-3-9q1-2 3 0l2 6V3q1-2 3 0l1 8 2-7q2-1 2 1l-1 8 3-5q2-1 2 1l-4 9-2 4z" fill="#e8eaec" stroke="#79828c" strokeWidth="1" /></Icon>
    </PlainButton>
    <PlainButton aria-label="Zoom">
      <Icon size={24}><path d="M2 7h10M7 2v10M2 15h9" stroke="#78828d" strokeWidth="2.5" /><circle cx="17" cy="15" r="4.5" fill="#e4e7ea" stroke="#79828c" /><path d="M20 19l3 3" stroke="#79828c" strokeWidth="2" /></Icon>
    </PlainButton>
    <PlainButton aria-label="Zoom all">
      <Icon size={24}><path d="M2 2h9l4 4v13H2zM11 2v4h4" fill="#d8dde2" stroke="#79828c" /><circle cx="16" cy="14" r="4.5" fill="#e4e7ea" stroke="#79828c" /><path d="M19 18l4 4" stroke="#79828c" strokeWidth="2" /></Icon>
    </PlainButton>
    <PlainButton aria-label="Zoom window">
      <Icon size={24}><path d="M1 2h16v15H1z" fill="#c9d0d8" stroke="#79828c" /><circle cx="17" cy="15" r="4.5" fill="#e4e7ea" stroke="#79828c" /><path d="M20 19l3 3" stroke="#79828c" strokeWidth="2" /></Icon>
    </PlainButton>
    <Icon w={22} h={12}><circle cx="17" cy="8" r="2.5" stroke="#808992" /></Icon>
  </NavigationBar>
);

const DrawingArea = () => (
  <DrawingColumn>
    <Canvas>
      <Sheet />
      <DimensionValue>10.000</DimensionValue>
      <CoordinateEntry>
        <CoordinateLabel htmlFor="coord-x">X</CoordinateLabel>
        <CoordinateInput id="coord-x" defaultValue="1.096 in" />
        <CoordinateLabel htmlFor="coord-y">Y</CoordinateLabel>
        <CoordinateInput id="coord-y" defaultValue="2.048 in" $last />
      </CoordinateEntry>
      <TitleBlock>
        <tbody>
          <tr><td colSpan={3}>GETTYSBURG AREA HIGH SCHOOL<br />GETTYSBURG, PA 17325</td></tr>
          <tr><td colSpan={3}>DRAWING TITLE:</td></tr>
          <tr><td colSpan={3}>DRAWN BY: MR. HARDY</td></tr>
          <tr><td>DATE: 4/4/2018</td><td>SCALE:</td><td>SHEET NO: 4</td></tr>
        </tbody>
      </TitleBlock>
      <DocumentButtons>
        <PlainButton aria-label="Minimize drawing"><Icon size={12}><path d="M2 10h7" strokeWidth="2" /></Icon></PlainButton>
        <PlainButton aria-label="Arrange drawing"><Icon size={12}><path d="M1 1h10v10H1zM6 1v10M6 6h5" strokeWidth="1.4" /></Icon></PlainButton>
        <PlainButton aria-label="Close drawing"><Close size={10} width={1.8} /></PlainButton>
      </DocumentButtons>
      <NavigationTools />
    </Canvas>
    <DocumentTabs>
      <DocumentTab $home><HomeIcon />Home</DocumentTab>
      {documents.map((name) => (
        <DocumentTab key={name} $active={name === 'FORM 5.idw'}>
          {name}
          <PlainButton aria-label={`Close ${name}`}><Close size={10} width={1.3} /></PlainButton>
        </DocumentTab>
      ))}
      <TabMenu aria-label="Document list"><Bars /></TabMenu>
    </DocumentTabs>
  </DrawingColumn>
);

const Status = () => (
  <StatusBar>
    <StatusText>Select Start point</StatusText>
    <Divider $height={16} />
    <StatusTools>
      <Icon size={16}><path d="M2 2h12v12H2zM2 6h12M2 10h12M6 2v12M10 2v12" /><path d="M10 10h5v6h-5z" fill="#cf5252" stroke="none" /></Icon>
      <Icon size={16}><path d="M5 2H2v12h3M12 2h3v6" /><path d="M4 6l4 5 5-6" stroke={RED} strokeWidth="1.5" /><circle cx="12" cy="11" r="3" fill="#3bbb94" stroke="none" /></Icon>
      <Icon size={16}><path d="M8 6H4L1 10v4h8" /><path d="M8 6l6-4v8l-5 4z" fill="#7dbbe4" stroke={BLUE} /></Icon>
      <Icon size={16}><path d="M1 6h10M6 1v10M3 4L1 6l2 2M9 4l2 2-2 2M4 3l2-2 2 2" strokeWidth="1.5" /><circle cx="12" cy="11" r="3.3" fill="#efae2f" stroke="none" /></Icon>
      <Icon size={16}><path d="M4 6h11M10 1v10M13 4l2 2-2 2M8 3l2-2 2 2" strokeWidth="1.5" /><path d="M1 4l10 10" stroke={RED} strokeWidth="1.5" /></Icon>
    </StatusTools>
    <StatusCount $width={43}>-  0</StatusCount>
    <StatusCount $width={33}>6</StatusCount>
  </StatusBar>
);

const App = () => {
  return (
    <Screen>
      <GlobalStyle />
      <TopBar />
      <TabStrip>
        <RibbonTab $kind="file">File</RibbonTab>
        <RibbonTab>Place Views</RibbonTab>
        <RibbonTab>Annotate</RibbonTab>
        <RibbonTab $kind="active">Sketch</RibbonTab>
        <RibbonTab>Tools</RibbonTab>
        <RibbonTab>Manage</RibbonTab>
        <RibbonTab>View</RibbonTab>
        <RibbonTab>Environments</RibbonTab>
        <RibbonTab>Collaborate</RibbonTab>
        <RibbonToggle aria-label="Ribbon display">
          <Icon w={15} h={9}><rect x=".6" y=".6" width="13.8" height="7.8" rx="2" /><path d="M5 6h5L7.500 3z" fill={GREY} stroke="none" /></Icon>
          <Caret />
        </RibbonToggle>
      </TabStrip>
      <RibbonBar />
      <Workspace>
        <BrowserPanel />
        <DrawingArea />
      </Workspace>
      <Status />
      <Watermark>
        <WatermarkTop>RECORDED WITH</WatermarkTop>
        <WatermarkBrand>
          SCREENCAST
          <Icon size={34}>
            <circle cx="17" cy="17" r="14.5" stroke="#6fb4dc" strokeWidth="3" />
            <circle cx="17" cy="17" r="6" fill="#6fb4dc" stroke="none" />
          </Icon>
          MATIC
        </WatermarkBrand>
      </Watermark>
    </Screen>
  );
};

export default App;
